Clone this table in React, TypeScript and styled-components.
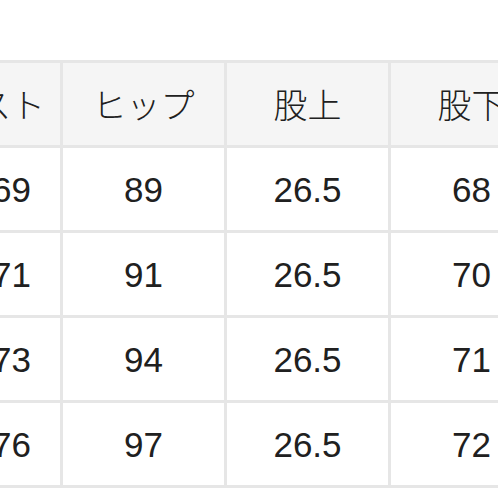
import React from "react";
import styled, { createGlobalStyle } from "styled-components";

const GlobalStyle = createGlobalStyle`
  html, body {
    margin: 0;
    padding: 0;
    background: #ffffff;
    overflow: hidden;
  }
  body {
    width: 498px;
    height: 498px;
  }
`;

const Page = styled.div`
  padding-top: 60px;
  margin-left: -104px;
`;

const Grid = styled.div`
  display: grid;
  grid-template-columns: repeat(5, 161px);
  grid-auto-rows: 82px;
  gap: 3px;
  padding: 3px;
  width: max-content;
  background: #e6e6e6;
`;

const Cell = styled.div<{ $head?: boolean; $lead?: boolean }>`
  display: flex;
  align-items: center;
  justify-content: ${({ $lead }) => ($lead ? "flex-end" : "center")};
  padding-right: ${({ $lead, $head }) => ($lead ? ($head ? "15px" : "29px") : "0")};
  background: ${({ $head }) => ($head ? "#f5f5f5" : "#ffffff")};
  color: #202020;
  white-space: nowrap;
  font-family: ${({ $head }) =>
    $head
      ? `"Noto Sans CJK JP", "Noto Sans", sans-serif`
      : `"Liberation Sans", Arial, sans-serif`};
  font-weight: ${({ $head }) => ($head ? 300 : 400)};
  font-size: ${({ $head }) => ($head ? "34px" : "35px")};
  line-height: 1;
`;

const headers = ["ウエスト", "ヒップ", "股上", "股下", "わたり"];

const rows = [
  ["69", "89", "26.5", "68", "30"],
  ["71", "91", "26.5", "70", "31"],
  ["73", "94", "26.5", "71", "32"],
  ["76", "97", "26.5", "72", "33"],
];

export default function App() {
  return (
    <>
      <GlobalStyle />
      <Page>
        <Grid>
          {headers.map((h, i) => (
            <Cell key={h} $head $lead={i === 0}>
              {h}
            </Cell>
          ))}
          {rows.map((row, r) =>
            row.map((v, i) => (
              <Cell key={`${r}-${i}`} $lead={i === 0}>
                {v}
              </Cell>
            ))
          )}
        </Grid>
      </Page>
    </>
  );
}
